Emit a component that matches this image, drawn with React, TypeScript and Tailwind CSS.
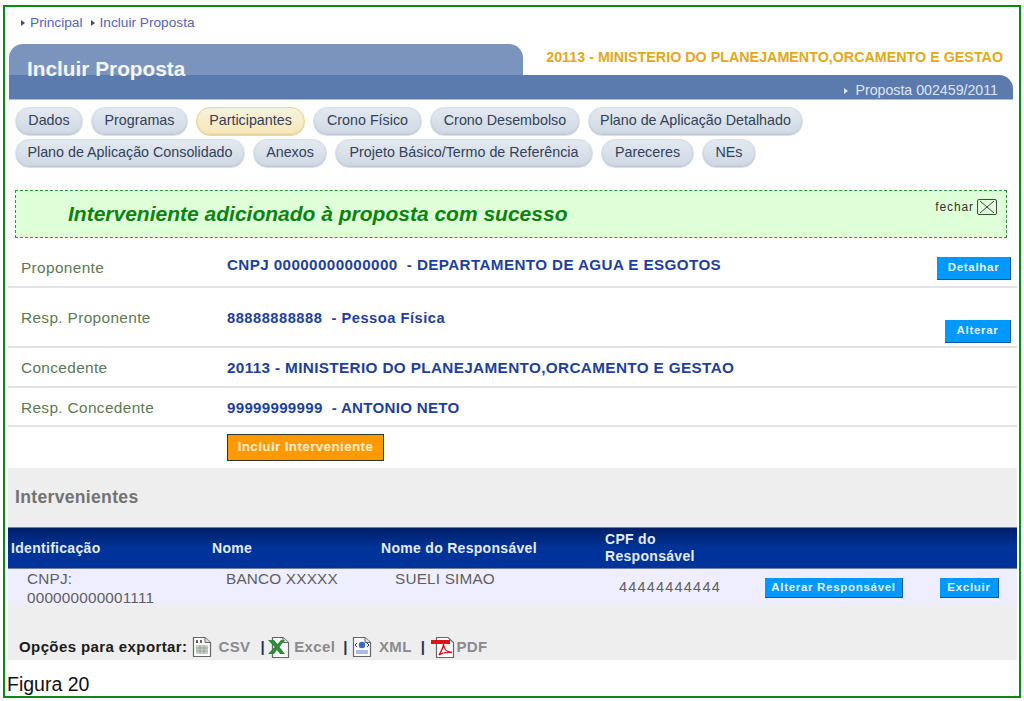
import * as React from 'react';

const SANS = 'font-["Liberation_Sans",Arial,sans-serif]';

type PillProps = {
  label: string;
  width: string;
  active?: boolean;
};

function Pill({ label, width, active }: PillProps) {
  return (
    <div
      className={`flex h-[29px] shrink-0 items-center justify-center rounded-[14px] border pb-[2px] text-[14.3px] text-[#33415a] shadow-[inset_0_-1px_2px_rgba(120,140,165,0.25)] ${width} ${
        active
          ? 'border-[#f0d488] bg-gradient-to-b from-[#f6f2de] to-[#f9e7b4]'
          : 'border-[#d8e0e8] bg-gradient-to-b from-[#e3e9ef] to-[#ced8e4]'
      }`}
    >
      {label}
    </div>
  );
}

function BlueButton({ label, className }: { label: string; className: string }) {
  return (
    <div
      className={`flex items-center justify-center border-r border-b border-[#0b57b0] bg-[#0099ff] text-[11.5px] font-bold tracking-[0.7px] text-[#e4f3ff] ${className}`}
    >
      {label}
    </div>
  );
}

type InfoRowProps = {
  label: string;
  value: string;
  height: string;
  pt: string;
  valueClass?: string;
  children?: React.ReactNode;
};

function InfoRow({ label, value, height, pt, valueClass, children }: InfoRowProps) {
  return (
    <div className={`relative flex items-start border-b-2 border-[#e2e2e2] pl-[13px] ${height} ${pt}`}>
      <div className="w-[206px] shrink-0 text-[15.4px] leading-[18px] tracking-[0.35px] text-[#5c7a52]">{label}</div>
      <div className={`leading-[18px] font-bold text-[#1d3f9f] ${valueClass ?? ''}`}>{value}</div>
      {children}
    </div>
  );
}

function DocIcon({ children }: { children?: React.ReactNode }) {
  return (
    <svg width="20" height="22" viewBox="0 0 20 22" className="shrink-0">
      <path d="M1.5 1.5H13L18.5 6.5V20.5H1.5Z" fill="#fff" stroke="#666" strokeWidth="1.2" />
      <path d="M13 1.5V6.5H18.5" fill="#ddd" stroke="#666" strokeWidth="1" />
      {children}
    </svg>
  );
}

function CsvIcon() {
  return (
    <DocIcon>
      <rect x="4" y="9" width="12" height="9" fill="#c9cfc9" />
      <path d="M4 12H16M4 15H16M8 9V18M12 9V18" stroke="#8a928a" strokeWidth="0.7" />
      <rect x="4" y="4" width="2" height="3" fill="#666" />
      <rect x="8" y="4" width="2" height="3" fill="#666" />
    </DocIcon>
  );
}

function ExcelIcon() {
  return (
    <svg width="22" height="23" viewBox="0 0 22 23" className="shrink-0">
      <path d="M4.5 1.5H15L20.5 6.5V21.5H4.5Z" fill="#fff" stroke="#666" strokeWidth="1.2" />
      <path d="M15 1.5V6.5H20.5" fill="#ddd" stroke="#666" strokeWidth="1" />
      <path d="M0 4H6L9.5 8L13 4H17L11.5 11L17 18H12L9 14L6 18H0L6.5 11Z" fill="#2f8a3a" />
    </svg>
  );
}

function XmlIcon() {
  return (
    <DocIcon>
      <circle cx="10" cy="9" r="3.2" fill="#2f6fd0" />
      <path d="M5 7L3 9L5 11M15 7L17 9L15 11" fill="none" stroke="#1c3f8f" strokeWidth="1" />
      <rect x="4" y="14" width="12" height="4" fill="#a9bfe0" />
    </DocIcon>
  );
}

function PdfIcon() {
  return (
    <svg width="24" height="23" viewBox="0 0 24 23" className="shrink-0">
      <path d="M5.5 1.5H17L22.5 6.5V21.5H5.5Z" fill="#fff" stroke="#666" strokeWidth="1.2" />
      <rect x="0" y="4" width="19" height="4" fill="#d8141c" />
      <path d="M8 19C11 14 12.5 11 12.5 8C12.5 12 15 16 21 16.5C15 16 11.5 16.5 8 19Z" fill="none" stroke="#d8141c" strokeWidth="1.4" />
    </svg>
  );
}

export default function App() {
  return (
    <div className={`h-[701px] w-[1024px] overflow-hidden bg-white pt-[5px] pl-[3px] ${SANS}`}>
      <div className="flex h-[693px] w-[1018px] flex-col border-2 border-[#0b8a1c] pl-[3px]">
        {/* breadcrumb */}
        <div className="flex h-[37px] items-start gap-[8px] pt-[8px] pl-[13px] text-[13.7px] leading-[16px] text-[#5563c2]">
          <span className="flex items-center gap-[5px]">
            <i className="h-0 w-0 border-y-[3px] border-l-[4px] border-y-transparent border-l-[#3d4f80]" />
            Principal
          </span>
          <span className="flex items-center gap-[5px]">
            <i className="h-0 w-0 border-y-[3px] border-l-[4px] border-y-transparent border-l-[#3d4f80]" />
            Incluir Proposta
          </span>
        </div>

        {/* title tab */}
        <div className="ml-[1px] flex h-[31px] w-[1004px] items-start">
          <div className="h-[31px] w-[514px] shrink-0 rounded-t-[14px] bg-[#7b94bd]" />
          <div className="flex-1 pt-[5px] pr-[10px] text-right text-[14.3px] leading-[16px] font-bold whitespace-nowrap text-[#e4a81c]">
            20113 - MINISTERIO DO PLANEJAMENTO,ORCAMENTO E GESTAO
          </div>
        </div>
        <div className="relative ml-[1px] flex h-[25px] w-[1004px] items-center justify-end rounded-tr-[14px] border-b border-[#a9bcd8] bg-[#5b7aae] pt-[8px] pr-[15px] text-[14.2px] text-[#dfe6f2]">
          <span className="absolute top-[-19px] left-[18px] text-[20.8px] leading-[26px] font-bold text-[#f4f6fa]">
            Incluir Proposta
          </span>
          <i className="mr-[7px] h-0 w-0 border-y-[3px] border-l-[4px] border-y-transparent border-l-[#dfe6f2]" />
          Proposta 002459/2011
        </div>

        {/* tabs */}
        <div className="flex flex-col gap-[3px] pt-[7px] pl-[7px]">
          <div className="flex gap-[8px]">
            <Pill label="Dados" width="w-[68px]" />
            <Pill label="Programas" width="w-[97px]" />
            <Pill label="Participantes" width="w-[109px]" active />
            <Pill label="Crono Físico" width="w-[109px]" />
            <Pill label="Crono Desembolso" width="w-[150px]" />
            <Pill label="Plano de Aplicação Detalhado" width="w-[215px]" />
          </div>
          <div className="flex gap-[8px]">
            <Pill label="Plano de Aplicação Consolidado" width="w-[230px]" />
            <Pill label="Anexos" width="w-[74px]" />
            <Pill label="Projeto Básico/Termo de Referência" width="w-[258px]" />
            <Pill label="Pareceres" width="w-[93px]" />
            <Pill label="NEs" width="w-[54px]" />
          </div>
        </div>

        {/* success message */}
        <div className="mt-[22px] ml-[7px] flex h-[48px] w-[992px] items-start border border-dashed border-[#2f9a3c] bg-[#dfffd8]">
          <div className="pt-[10px] pl-[52px] text-[21px] leading-[26px] font-bold whitespace-nowrap text-[#0a840f] italic">
            Interveniente adicionado à proposta com sucesso
          </div>
          <div className="ml-auto flex items-center gap-[3px] pt-[8px] pr-[9px] text-[12px] leading-[16px] tracking-[0.9px] text-[#333]">
            fechar
            <svg width="20" height="16" viewBox="0 0 20 16">
              <rect x="0.5" y="0.5" width="19" height="15" rx="1.5" fill="none" stroke="#444" />
              <path d="M3 2L17 14M17 2L3 14" stroke="#444" strokeWidth="1" />
            </svg>
          </div>
        </div>

        {/* participants */}
        <div className="w-[1009px]">
          <InfoRow
            label="Proponente"
            value="CNPJ 00000000000000  - DEPARTAMENTO DE AGUA E ESGOTOS"
            height="h-[50px]"
            pt="pt-[21px]"
            valueClass="mt-[-3px] text-[15.2px] tracking-[0.4px] whitespace-pre"
          >
            <BlueButton label="Detalhar" className="absolute top-[19px] right-[6px] h-[23px] w-[74px]" />
          </InfoRow>
          <InfoRow
            label="Resp. Proponente"
            value="88888888888  - Pessoa Física"
            height="h-[60px]"
            pt="pt-[21px]"
            valueClass="text-[14.7px] tracking-[0.5px] whitespace-pre"
          >
            <BlueButton label="Alterar" className="absolute top-[32px] right-[6px] h-[23px] w-[66px]" />
          </InfoRow>
          <InfoRow
            label="Concedente"
            value="20113 - MINISTERIO DO PLANEJAMENTO,ORCAMENTO E GESTAO"
            height="h-[40px]"
            pt="pt-[11px]"
            valueClass="text-[15.3px] tracking-[0.35px]"
          />
          <InfoRow
            label="Resp. Concedente"
            value="99999999999  - ANTONIO NETO"
            height="h-[39px]"
            pt="pt-[11px]"
            valueClass="text-[15.1px] tracking-[0.3px] whitespace-pre"
          />
          <div className="h-[41px] pt-[7px] pl-[219px]">
            <div className="flex h-[27px] w-[157px] items-center justify-center border border-[#333] bg-[#ff9900] text-[13.5px] font-bold tracking-[0.35px] whitespace-nowrap text-[#fdf0d8]">
              Incluir Interveniente
            </div>
          </div>
        </div>

        {/* interveners */}
        <div className="flex h-[192px] w-[1009px] flex-col bg-[#eeeeee]">
          <div className="h-[59px] pt-[18px] pl-[7px] text-[17.6px] leading-[22px] font-bold tracking-[0.3px] text-[#737373]">
            Intervenientes
          </div>
          <div className="grid h-[42px] grid-cols-[201px_169px_224px_1fr] items-center border-y border-[#6f7fa8] bg-gradient-to-b from-[#001f66] to-[#003399] to-50% pl-[3px] text-[14px] leading-[17px] font-bold tracking-[0.3px] text-[#e6ebf5]">
            <div>Identificação</div>
            <div>Nome</div>
            <div>Nome do Responsável</div>
            <div>
              CPF do
              <br />
              Responsável
            </div>
          </div>
          <div className="relative grid h-[36px] grid-cols-[199px_169px_224px_1fr] bg-[#eeeefe] pl-[19px] text-[15.3px] leading-[19px] text-[#5f5f5f]">
            <div className="tracking-[0.2px]">
              CNPJ:
              <br />
              000000000001111
            </div>
            <div className="tracking-[0.2px]">BANCO XXXXX</div>
            <div className="tracking-[0.2px]">SUELI SIMAO</div>
            <div className="pt-[9px] text-[14.5px] tracking-[1.2px]">44444444444</div>
            <BlueButton label="Alterar Responsável" className="absolute top-[9px] left-[757px] h-[20px] w-[138px]" />
            <BlueButton label="Excluir" className="absolute top-[9px] left-[932px] h-[20px] w-[59px]" />
          </div>
          <div className="flex items-center pt-[30px] pl-[11px] text-[15px] leading-[24px] font-bold tracking-[0.4px] text-[#8a8a8f]">
            <span className="mr-[5px] text-[#1c1c1c]">Opções para exportar:</span>
            <CsvIcon />
            <span className="ml-[6px]">CSV</span>
            <span className="mr-[3px] ml-[10px] text-[#24344f]">|</span>
            <ExcelIcon />
            <span className="ml-[4px]">Excel</span>
            <span className="mr-[4px] ml-[8px] text-[#24344f]">|</span>
            <XmlIcon />
            <span className="ml-[7px]">XML</span>
            <span className="mr-[6px] ml-[9px] text-[#24344f]">|</span>
            <PdfIcon />
            <span className="ml-[1px]">PDF</span>
          </div>
        </div>

        <div className="-ml-[1px] pt-[14px] text-[19.5px] leading-[20px] text-[#111]">Figura 20</div>
      </div>
    </div>
  );
}
